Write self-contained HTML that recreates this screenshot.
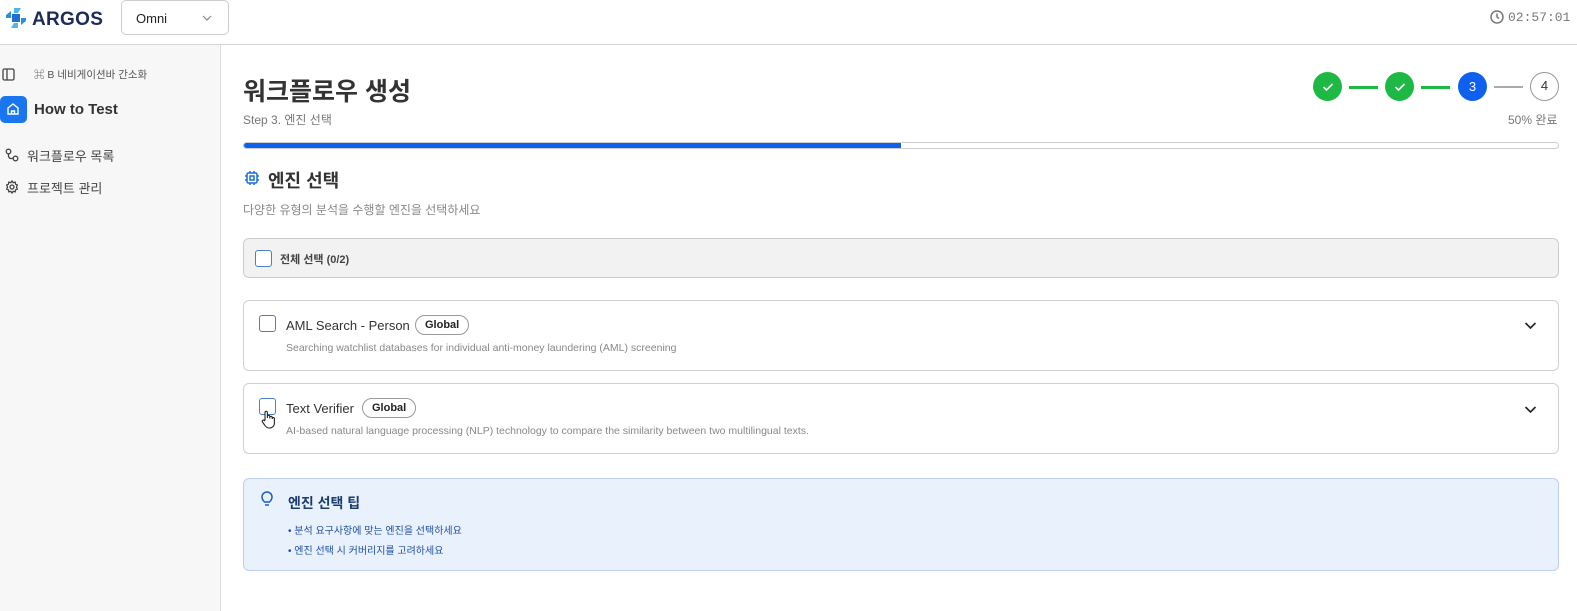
<!DOCTYPE html>
<html><head><meta charset="utf-8"><style>
*{box-sizing:border-box;margin:0;padding:0}
body{width:1577px;height:611px;overflow:hidden;background:#fff;font-family:"Liberation Sans","Noto Sans CJK KR",sans-serif;color:#222;position:relative}
.abs{position:absolute}
.top{left:0;top:0;width:1577px;height:45px;border-bottom:1px solid #d4d4d4;background:#fff}
.side{left:0;top:45px;width:221px;height:566px;background:#f7f7f7;border-right:1px solid #ddd}
.card{border:1px solid #d0d0d0;border-radius:6px;background:#fff}
.cb{width:17px;height:17px;border:1.5px solid #4a7fc4;border-radius:3px;background:#fff}
.pill{border:1px solid #999;border-radius:11px;font-size:11px;font-weight:bold;padding:3px 9px;display:inline-block}
.circ{width:29px;height:29px;border-radius:50%;text-align:center;line-height:29px;font-size:13px}
</style></head><body>
<div class="abs top">
  <svg class="abs" style="left:5px;top:7px" width="22" height="22" viewBox="0 0 22 22"><path d="M9 1h7l-3 5h-4z" fill="#4fb6ec"/><path d="M1 8l5-4v7H1z" fill="#2b8fe0"/><path d="M21 14l-5 4v-7h5z" fill="#2b8fe0"/><path d="M13 21H6l3-5h4z" fill="#4fb6ec"/><rect x="7" y="7" width="8" height="8" fill="#1d6fd0"/></svg>
  <div class="abs" style="left:32px;top:9px;font-size:19px;font-weight:bold;color:#1d2a5a;letter-spacing:0.3px">ARGOS</div>
  <div class="abs" style="left:121px;top:0;width:108px;height:35px;border:1px solid #ccc;border-radius:5px;font-size:13px;padding:10px 0 0 14px">Omni<svg class="abs" style="left:80px;top:14px" width="10" height="6" viewBox="0 0 10 6" fill="none" stroke="#888" stroke-width="1.2"><path d="M1 1l4 4 4-4"/></svg></div>
  <svg class="abs" style="left:1490px;top:10px" width="14" height="14" viewBox="0 0 14 14" fill="none" stroke="#777" stroke-width="1.5"><circle cx="7" cy="7" r="6"/><path d="M7 3.5V7l2 1.5"/></svg>
  <div class="abs" style="left:1508px;top:10px;font-family:'Liberation Mono',monospace;font-size:13px;color:#777">02:57:01</div>
</div>
<div class="abs side">
  <svg class="abs" style="left:2px;top:23px" width="13" height="13" viewBox="0 0 13 13" fill="none" stroke="#444" stroke-width="1.3"><rect x="1" y="1" width="11" height="11" rx="1.5"/><path d="M5 1v11"/></svg>
  <div class="abs" style="left:34px;top:22px;font-size:10.5px;color:#555">⌘ B 네비게이션바 간소화</div>
  <div class="abs" style="left:0;top:51px;width:27px;height:27px;background:#1976f0;border-radius:5px"></div>
  <svg class="abs" style="left:6px;top:57px" width="14" height="14" viewBox="0 0 14 14" fill="none" stroke="#fff" stroke-width="1.4"><path d="M2 6l5-4 5 4v6H2z"/><path d="M5.5 12V9h3v3"/></svg>
  <div class="abs" style="left:34px;top:56px;font-size:15px;font-weight:bold;color:#333">How to Test</div>
  <svg class="abs" style="left:5px;top:103px" width="14" height="14" viewBox="0 0 14 14" fill="none" stroke="#444" stroke-width="1.3"><circle cx="3.5" cy="3.5" r="2.3"/><circle cx="10.5" cy="10.5" r="2.3"/><path d="M3.5 6v2a2.5 2.5 0 002.5 2.5h2"/></svg>
  <div class="abs" style="left:27px;top:101px;font-size:13px;color:#444">워크플로우 목록</div>
  <svg class="abs" style="left:5px;top:135px" width="14" height="14" viewBox="0 0 14 14" fill="none" stroke="#444" stroke-width="1.3"><circle cx="7" cy="7" r="2"/><path d="M7 1l1.2 1.6 2-.4.4 2L12.3 5l-.8 2 .8 2-1.7.8-.4 2-2-.4L7 13l-1.2-1.6-2 .4-.4-2L1.7 9l.8-2-.8-2 1.7-.8.4-2 2 .4z"/></svg>
  <div class="abs" style="left:27px;top:133px;font-size:13px;color:#444">프로젝트 관리</div>
</div>
<div class="abs" style="left:243px;top:72px;font-size:25px;font-weight:bold;color:#333">워크플로우 생성</div>
<div class="abs" style="left:243px;top:111px;font-size:12px;color:#777">Step 3. 엔진 선택</div>
<div class="abs circ" style="left:1313px;top:72px;background:#1db944"><svg width="12" height="10" viewBox="0 0 12 10" fill="none" stroke="#fff" stroke-width="1.6" style="margin-top:10px"><path d="M1.5 5l3 3 6-6"/></svg></div>
<div class="abs" style="left:1349px;top:86px;width:29px;height:3px;background:#1db944"></div>
<div class="abs circ" style="left:1385px;top:72px;background:#1db944"><svg width="12" height="10" viewBox="0 0 12 10" fill="none" stroke="#fff" stroke-width="1.6" style="margin-top:10px"><path d="M1.5 5l3 3 6-6"/></svg></div>
<div class="abs" style="left:1421px;top:86px;width:29px;height:3px;background:#1db944"></div>
<div class="abs circ" style="left:1458px;top:72px;background:#1060f0;color:#fff">3</div>
<div class="abs" style="left:1494px;top:86px;width:29px;height:2px;background:#aaa"></div>
<div class="abs circ" style="left:1530px;top:72px;border:1.5px solid #999;color:#333;line-height:26px">4</div>
<div class="abs" style="left:1508px;top:111px;font-size:12px;color:#777">50% 완료</div>
<div class="abs" style="left:243px;top:142px;width:1316px;height:7px;border:1px solid #ccc;border-radius:4px;overflow:hidden"><div style="width:657px;height:100%;background:#1060f0"></div></div>
<svg class="abs" style="left:244px;top:170px" width="16" height="16" viewBox="0 0 16 16" fill="none" stroke="#1a6fd8" stroke-width="1.5"><rect x="3" y="3" width="10" height="10" rx="1.5"/><rect x="6" y="6" width="4" height="4"/><path d="M6 1v2M10 1v2M6 13v2M10 13v2M1 6h2M1 10h2M13 6h2M13 10h2"/></svg>
<div class="abs" style="left:268px;top:167px;font-size:18px;font-weight:bold;color:#333">엔진 선택</div>
<div class="abs" style="left:243px;top:201px;font-size:12px;color:#888">다양한 유형의 분석을 수행할 엔진을 선택하세요</div>
<div class="abs card" style="left:243px;top:238px;width:1316px;height:40px;background:#f2f2f2;border-color:#ccc"></div>
<div class="abs cb" style="left:255px;top:250px"></div>
<div class="abs" style="left:280px;top:251px;font-size:11px;font-weight:bold;color:#444">전체 선택 (0/2)</div>
<div class="abs card" style="left:243px;top:300px;width:1316px;height:71px"></div>
<div class="abs cb" style="left:259px;top:315px"></div>
<div class="abs" style="left:286px;top:318px;font-size:13px;color:#333">AML Search - Person</div>
<div class="abs pill" style="left:415px;top:315px">Global</div>
<div class="abs" style="left:286px;top:342px;font-size:10.5px;color:#888">Searching watchlist databases for individual anti-money laundering (AML) screening</div>
<svg class="abs" style="left:1524px;top:321px" width="13" height="9" viewBox="0 0 13 9" fill="none" stroke="#222" stroke-width="1.6"><path d="M1.5 2l5 5 5-5"/></svg>
<div class="abs card" style="left:243px;top:383px;width:1316px;height:71px"></div>
<div class="abs cb" style="left:259px;top:398px"></div>
<svg class="abs" style="left:261px;top:410px" width="14" height="19" viewBox="0 0 14 19" fill="#fff" stroke="#222" stroke-width="1.1"><path d="M4 10V2.5a1.2 1.2 0 012.4 0V8v-1.5a1.2 1.2 0 012.4 0V8.5v-1a1.2 1.2 0 012.4 0V9v-.3a1.1 1.1 0 012.2 0V13c0 3-2 5-5 5H8c-2 0-3-1-4-2.5L1.5 12a1.2 1.2 0 012-1.4z"/></svg>
<div class="abs" style="left:286px;top:401px;font-size:13px;color:#333">Text Verifier</div>
<div class="abs pill" style="left:362px;top:398px">Global</div>
<div class="abs" style="left:286px;top:425px;font-size:10.5px;color:#888">AI-based natural language processing (NLP) technology to compare the similarity between two multilingual texts.</div>
<svg class="abs" style="left:1524px;top:405px" width="13" height="9" viewBox="0 0 13 9" fill="none" stroke="#222" stroke-width="1.6"><path d="M1.5 2l5 5 5-5"/></svg>
<div class="abs" style="left:243px;top:478px;width:1316px;height:93px;background:#e9f1fd;border:1px solid #bcd0ee;border-radius:6px"></div>
<svg class="abs" style="left:261px;top:491px" width="12" height="17" viewBox="0 0 12 17" fill="none" stroke="#1a5fc0" stroke-width="1.5"><path d="M3.5 11C2 9.5 1 8 1 6a5 5 0 0110 0c0 2-1 3.5-2.5 5z"/><path d="M4 14h4"/></svg>
<div class="abs" style="left:288px;top:493px;font-size:14px;font-weight:bold;color:#1c3b6e">엔진 선택 팁</div>
<div class="abs" style="left:288px;top:522px;font-size:10px;color:#1f4fa0">• 분석 요구사항에 맞는 엔진을 선택하세요</div>
<div class="abs" style="left:288px;top:542px;font-size:10px;color:#1f4fa0">• 엔진 선택 시 커버리지를 고려하세요</div>
</body></html>
